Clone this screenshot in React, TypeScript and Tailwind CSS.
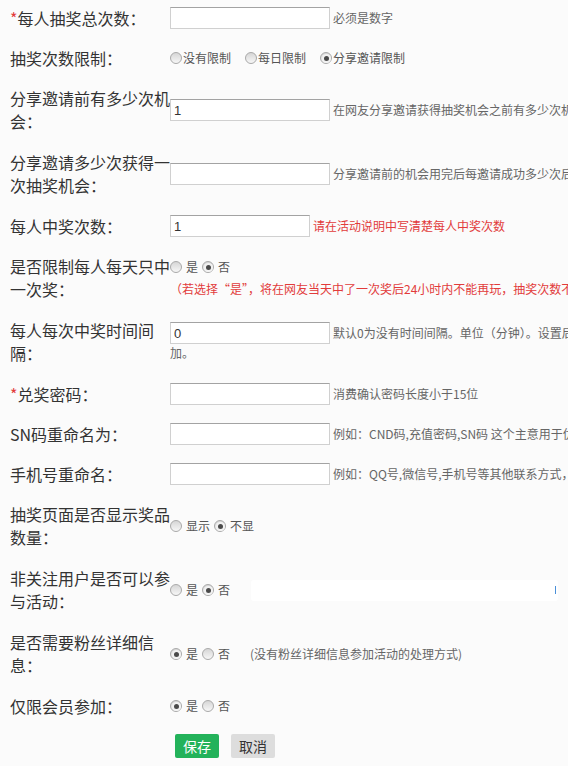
import React from 'react'

const font = { fontFamily: '"Noto Sans CJK SC", "Noto Sans", sans-serif' }

function Radio({ checked }: { checked?: boolean }) {
    return (
        <span className="inline-flex w-[12px] h-[12px] shrink-0 items-center justify-center rounded-full border border-[#a9a9a9] bg-linear-to-b from-[#d6d6d6] to-[#f7f7f7]">
            {checked && <span className="w-[5px] h-[5px] rounded-full bg-[#4a4a4a] shadow-[0_0_0_2px_#f2f2f2]" />}
        </span>
    )
}

function Choice({ checked, text }: { checked?: boolean; text: string }) {
    return (
        <span className="inline-flex items-center">
            <Radio checked={checked} />
            <span className="ml-[4px] mr-[4px] text-[12px] text-[#555]">{text}</span>
        </span>
    )
}

function Input({ value, wide = true }: { value?: string; wide?: boolean }) {
    return (
        <input
            readOnly
            value={value ?? ''}
            className={`${wide ? 'w-[160px]' : 'w-[140px]'} h-[22px] shrink-0 border border-[#d0d0d0] border-t-[#a3a3a3] bg-white pl-[3px] text-[13px] text-[#333] outline-none font-['Liberation_Sans',Arial,sans-serif]`}
        />
    )
}

function Help({ children, red }: { children: React.ReactNode; red?: boolean }) {
    return (
        <span className={`ml-[3px] whitespace-nowrap text-[12px] ${red ? 'text-[#e23b3b]' : 'text-[#666]'}`}>
            {children}
        </span>
    )
}

function Row({
                 label,
                 required,
                 tall,
                 children,
             }: {
    label: string
    required?: boolean
    tall?: boolean
    children: React.ReactNode
}) {
    return (
        <div className={tall ? 'flex items-center h-[64px]' : 'flex items-center h-[40px]'}>
            <div className="w-[160px] shrink-0 text-[16px] leading-[23px] text-[#333]">
                {required && <span className="text-[#e23b3b]">*</span>}
                {label}
            </div>
            <div className="flex-1 min-w-0 whitespace-nowrap">{children}</div>
        </div>
    )
}

export default function App() {
    return (
        <div className="h-screen w-full overflow-hidden bg-[#fbfbfb]" style={font}>
            <div className="-mt-[2px] pl-[10px]">
                <Row label="每人抽奖总次数：" required>
                    <div className="flex items-center">
                        <Input />
                        <Help>必须是数字</Help>
                    </div>
                </Row>

                <Row label="抽奖次数限制：">
                    <div className="flex items-center text-[12px] text-[#555]">
                        <span className="inline-flex items-center mr-[14px]">
                            <Radio />
                            <span className="ml-px">没有限制</span>
                        </span>
                        <span className="inline-flex items-center mr-[14px]">
                            <Radio />
                            <span className="ml-px">每日限制</span>
                        </span>
                        <span className="inline-flex items-center">
                            <Radio checked />
                            <span className="ml-px">分享邀请限制</span>
                        </span>
                    </div>
                </Row>

                <Row label="分享邀请前有多少次机会：" tall>
                    <div className="flex items-center">
                        <Input value="1" />
                        <Help>在网友分享邀请获得抽奖机会之前有多少次机会可以抽奖</Help>
                    </div>
                </Row>

                <Row label="分享邀请多少次获得一次抽奖机会：" tall>
                    <div className="flex items-center">
                        <Input />
                        <Help>分享邀请前的机会用完后每邀请成功多少次后获得一次抽奖机会</Help>
                    </div>
                </Row>

                <Row label="每人中奖次数：">
                    <div className="flex items-center">
                        <Input value="1" wide={false} />
                        <Help red>请在活动说明中写清楚每人中奖次数</Help>
                    </div>
                </Row>

                <Row label="是否限制每人每天只中一次奖：" tall>
                    <div className="flex flex-col">
                        <div className="flex items-center h-[22px]">
                            <Choice text="是" />
                            <Choice checked text="否" />
                        </div>
                        <div className="h-[22px] leading-[22px] text-[12px] text-[#e23b3b]">
                            （若选择“是”，将在网友当天中了一次奖后24小时内不能再玩，抽奖次数不受影响）
                        </div>
                    </div>
                </Row>

                <Row label="每人每次中奖时间间隔：" tall>
                    <div className="flex flex-col">
                        <div className="flex items-center">
                            <Input value="0" />
                            <Help>默认0为没有时间间隔。单位（分钟）。设置后中奖用户需间隔该时间才能再次参</Help>
                        </div>
                        <div className="h-[18px] leading-[18px] text-[12px] text-[#666]">加。</div>
                    </div>
                </Row>

                <Row label="兑奖密码：" required>
                    <div className="flex items-center">
                        <Input />
                        <Help>消费确认密码长度小于15位</Help>
                    </div>
                </Row>

                <Row label="SN码重命名为：">
                    <div className="flex items-center">
                        <Input />
                        <Help>例如：CND码,充值密码,SN码 这个主意用于优惠券类奖品的名称</Help>
                    </div>
                </Row>

                <Row label="手机号重命名：">
                    <div className="flex items-center">
                        <Input />
                        <Help>例如：QQ号,微信号,手机号等其他联系方式，用于兑奖时填写</Help>
                    </div>
                </Row>

                <Row label="抽奖页面是否显示奖品数量：" tall>
                    <div className="flex items-center">
                        <Choice text="显示" />
                        <Choice checked text="不显" />
                    </div>
                </Row>

                <Row label="非关注用户是否可以参与活动：" tall>
                    <div className="flex items-center">
                        <Choice text="是" />
                        <Choice checked text="否" />
                        <div className="ml-[17px] flex h-[21px] w-[307px] items-center justify-end rounded-[3px] bg-white pr-[2px]">
                            <span className="h-[8px] w-px bg-[#4a90d9]" />
                        </div>
                    </div>
                </Row>

                <Row label="是否需要粉丝详细信息：" tall>
                    <div className="flex items-center">
                        <Choice checked text="是" />
                        <Choice text="否" />
                        <span className="ml-[16px] text-[12px] text-[#666]">(没有粉丝详细信息参加活动的处理方式)</span>
                    </div>
                </Row>

                <Row label="仅限会员参加：">
                    <div className="flex items-center">
                        <Choice checked text="是" />
                        <Choice text="否" />
                    </div>
                </Row>

                <div className="flex h-[40px] items-center pl-[165px]">
                    <button className="h-[24px] w-[44px] rounded-[2px] bg-[#23b25a] text-[14px] text-white">保存</button>
                    <button className="ml-[12px] h-[24px] w-[44px] rounded-[2px] bg-[#dddddd] text-[14px] text-[#333]">取消</button>
                </div>
            </div>
        </div>
    )
}
